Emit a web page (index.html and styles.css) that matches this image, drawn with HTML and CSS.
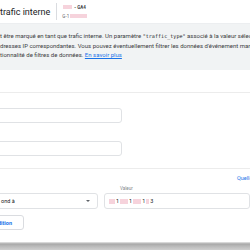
FILE: index.html
```html
<!DOCTYPE html>
<html lang="fr">
<head>
<meta charset="utf-8">
<link rel="stylesheet" href="styles.css">
</head>
<body>
<div class="page">
  <header class="header">
    <div class="title">trafic interne</div>
    <div class="divider"></div>
    <div class="prop">
      <div class="prop-top"><span class="redact r1"></span> - GA4</div>
      <div class="prop-id">G-1<span class="redact r2"></span></div>
    </div>
  </header>
  <section class="banner">
    <div class="line">t être marqué en tant que trafic interne. Un paramètre <code>"traffic_type"</code> associé à la valeur sélectionnée</div>
    <div class="line">dresses IP correspondantes. Vous pouvez éventuellement filtrer les données d'événement marquées</div>
    <div class="line">tionnalité de filtres de données. <a href="#" class="link">En savoir plus</a></div>
  </section>
  <div class="section-gap"></div>
  <div class="form">
    <div class="field"></div>
    <div class="field"></div>
  </div>
  <div class="rules">
    <div class="link-row"><a href="#" class="link">Quelle est mon adresse IP ?</a></div>
    <div class="label-row"><span class="label">Valeur</span></div>
    <div class="cond">
      <div class="select"><span>ond à</span><span class="arrow"></span></div>
      <div class="value"><span class="redact r3"></span>1<span class="redact r4"></span>1<span class="redact r5"></span>1<span class="redact r6"></span>3</div>
    </div>
    <button class="add-btn">dition</button>
  </div>
  <div class="footer-shadow"></div>
</div>
</body>
</html>
```
FILE: styles.css
```css
html, body {
  margin: 0;
  padding: 0;
  background: #ffffff;
}
body {
  width: 250px;
  height: 250px;
  overflow: hidden;
  font-family: Roboto, "Liberation Sans", sans-serif;
  color: #3c4043;
}
.page {
  display: flex;
  flex-direction: column;
  width: 250px;
  height: 250px;
}
.header {
  height: 23px;
  display: flex;
  align-items: center;
  border-bottom: 1px solid #eceef0;
  flex: none;
}
.title {
  font-size: 9px;
  color: #202124;
  white-space: nowrap;
}
.divider {
  width: 1px;
  height: 17px;
  background: #dadce0;
  margin-left: 6px;
}
.prop {
  margin-left: 5px;
  display: flex;
  flex-direction: column;
  gap: 4px;
  font-size: 4.5px;
  line-height: 5px;
  white-space: nowrap;
}
.prop-top {
  font-weight: 700;
  color: #3c4043;
  display: flex;
  align-items: center;
  gap: 2px;
  padding-left: 1px;
}
.prop-id {
  color: #5f6368;
  display: flex;
  align-items: center;
}
.redact {
  display: inline-block;
  background: #f6d3dc;
  vertical-align: middle;
}
.r1 { width: 9px; height: 4px; }
.r2 { width: 17px; height: 4px; margin-left: 1px; }
.banner {
  background: #f1f3f4;
  padding: 7px 0 11px;
  font-size: 6px;
  line-height: 9px;
  color: #3c4043;
  flex: none;
}
.line {
  white-space: nowrap;
}
.banner code {
  font-family: "DejaVu Sans Mono", "Liberation Mono", monospace;
  font-size: 5.1px;
  color: #202124;
}
.link {
  color: #1a73e8;
  text-decoration: none;
}
.banner .link {
  text-decoration: underline;
}
.section-gap {
  height: 22px;
  border-bottom: 1px solid #ececec;
  flex: none;
}
.form {
  padding: 15px 0 12px;
  display: flex;
  flex-direction: column;
  gap: 18px;
  border-bottom: 1px solid #ececec;
  flex: none;
}
.field {
  height: 13px;
  width: 130px;
  margin-left: -10px;
  border: 1px solid #e0e2e5;
  border-radius: 3px;
}
.rules {
  display: flex;
  flex-direction: column;
  flex: none;
}
.link-row {
  display: flex;
  justify-content: flex-start;
  padding-left: 237px;
  height: 9px;
  margin-top: 5px;
  font-size: 5.5px;
  line-height: 9px;
  white-space: nowrap;
}
.label-row {
  padding-left: 120px;
  margin-top: 2px;
  height: 8px;
  font-size: 4.5px;
  line-height: 8px;
  color: #80868b;
}
.cond {
  display: flex;
  gap: 6px;
  margin-left: -20px;
  margin-top: 0;
}
.select {
  height: 14px;
  border: 1px solid #e0e2e5;
  border-radius: 3px;
  display: flex;
  align-items: center;
  justify-content: space-between;
  padding: 0 7px 0 20px;
  box-sizing: content-box;
  width: 106px;
  font-size: 5.5px;
  color: #202124;
  white-space: nowrap;
}
.arrow {
  width: 0;
  height: 0;
  border-left: 2px solid transparent;
  border-right: 2px solid transparent;
  border-top: 2px solid #5f6368;
}
.value {
  flex: 1;
  min-width: 140px;
  height: 14px;
  border: 1px solid #e0e2e5;
  border-radius: 3px;
  display: flex;
  align-items: center;
  padding-left: 4px;
  font-size: 5.5px;
  color: #202124;
  white-space: nowrap;
}
.r3 { width: 6px; height: 5px; margin-right: 1px; }
.r4 { width: 8px; height: 5px; margin: 0 1px; }
.r5 { width: 8px; height: 5px; margin: 0 1px; }
.r6 { width: 3px; height: 5px; margin: 0 1px; }
.add-btn {
  margin-top: 6px;
  margin-left: -20px;
  width: 44px;
  height: 15px;
  border: 1px solid #dadce0;
  border-radius: 3px;
  background: #ffffff;
  color: #1a73e8;
  font-family: Roboto, "Liberation Sans", sans-serif;
  font-size: 5.5px;
  font-weight: 700;
  text-align: right;
  padding: 0 11px 0 0;
}
.footer-shadow {
  margin-top: auto;
  height: 8px;
  flex: none;
  background: linear-gradient(#e8e8e8 0, #a8a8a8 2px, #b8b8b8 4px, #cfcfcf 8px);
}
```
